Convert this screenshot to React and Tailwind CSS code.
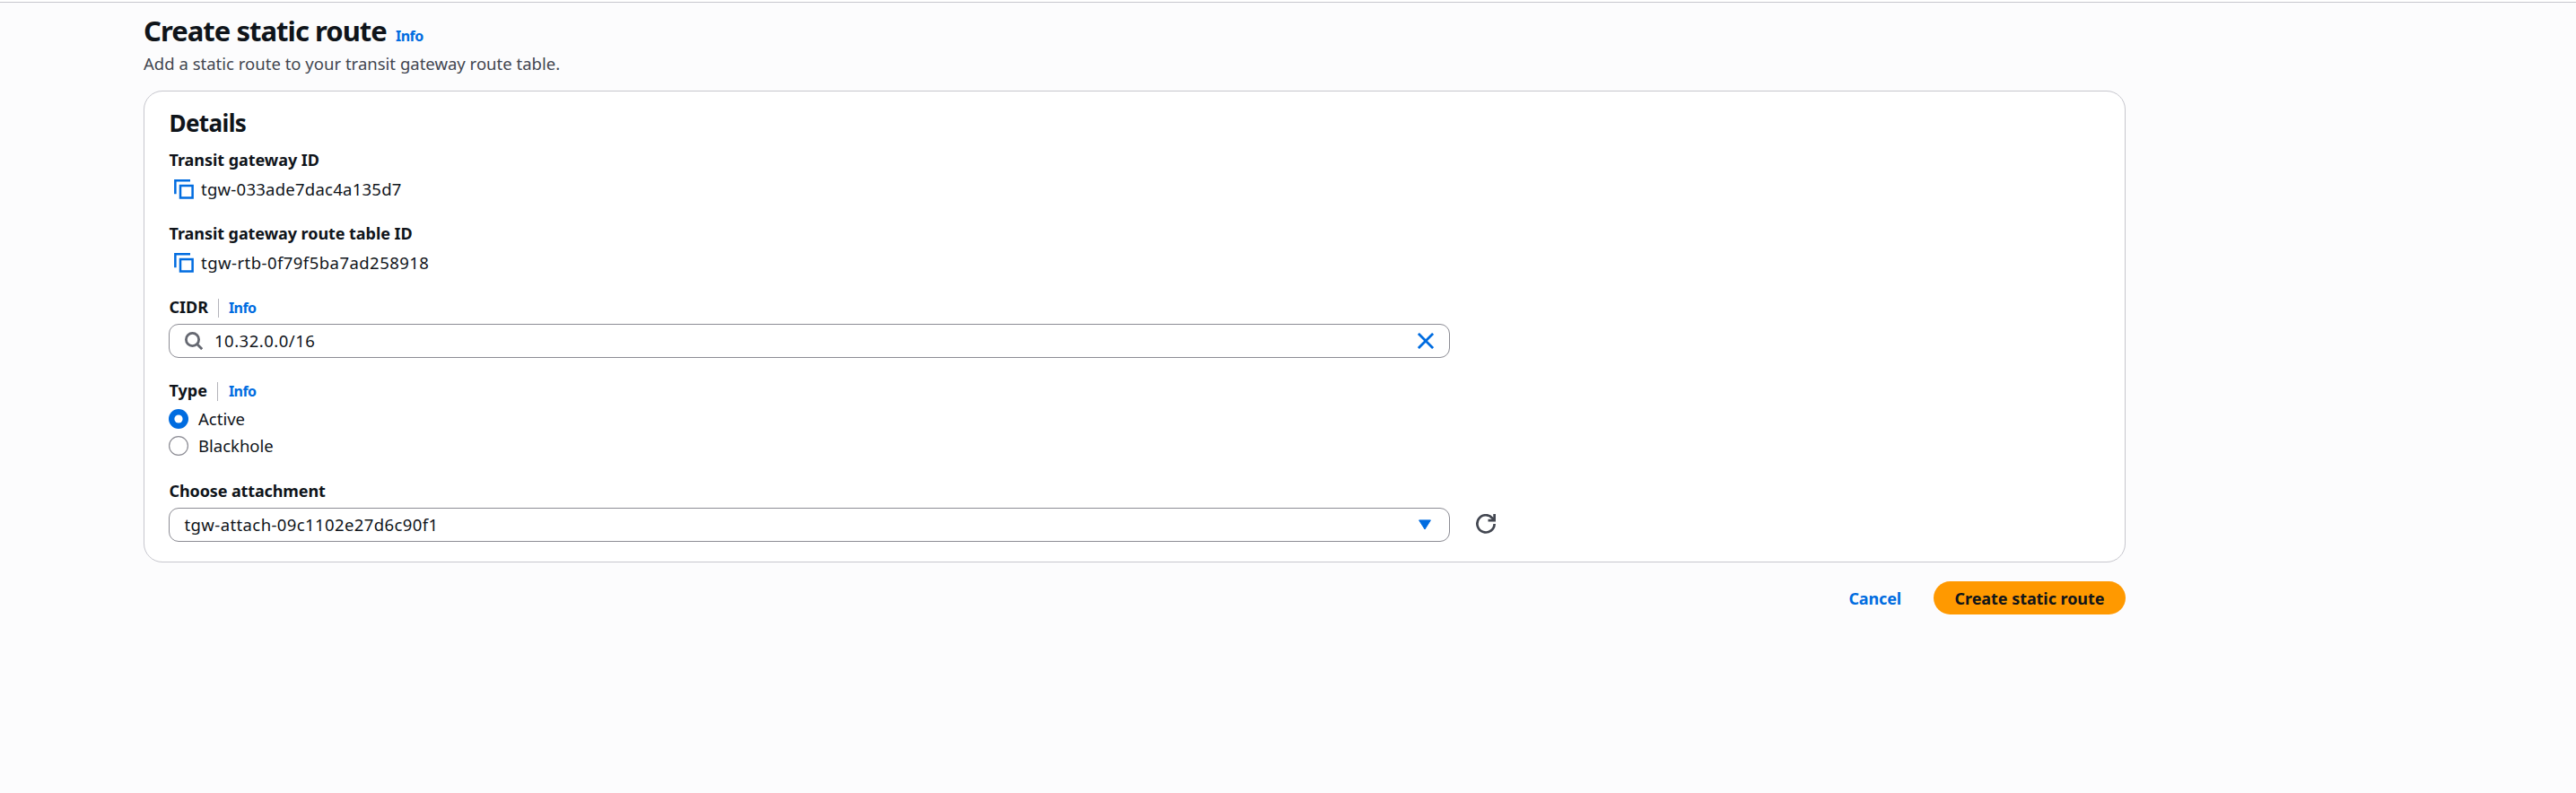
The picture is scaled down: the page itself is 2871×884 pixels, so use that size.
import React from "react";

function CopyIcon() {
  return (
    <svg className="ml-[6px] mr-[8px] h-[22px] w-[22px] shrink-0" viewBox="0 0 22 22" fill="none" stroke="#006ce0" strokeWidth="2.5">
      <path d="M1.35 16.2V1.35H18" />
      <path d="M7 7H20.6V20.6H7Z" />
    </svg>
  );
}

function Info({ className = "" }) {
  return (
    <a className={"text-[16px] font-bold text-[#006ce0] " + className}>Info</a>
  );
}

function CopyField({ label, labelClass, value, valueClass }) {
  return (
    <div className="flex flex-col gap-[7px]">
      <div className={"h-[26px] pl-[0.5px] font-bold " + labelClass}>{label}</div>
      <div className="flex h-[26px] items-center">
        <CopyIcon />
        <span className={"text-[18.5px] " + valueClass}>{value}</span>
      </div>
    </div>
  );
}

function LabelWithInfo({ label, className, dividerClass }) {
  return (
    <div className="flex h-[26px] items-center">
      <span className={"pl-[0.5px] font-bold " + className}>{label}</span>
      <span className={"mt-[2px] h-[21px] w-px bg-[#b4b4bb] " + dividerClass} />
      <Info className="mt-px w-[32px] tracking-[-0.6px]" />
    </div>
  );
}

export default function App() {
  return (
    <div className="h-[884px] w-full overflow-hidden bg-[#fcfcfd] font-['Noto_Sans',sans-serif] text-[18px] leading-[26px] whitespace-nowrap text-[#0f141a]">
      <div className="h-[3px] border-b border-[#c6c6cd] bg-white" />
      <main className="ml-[160px] w-[2209px] pt-[10px]">
        <header>
          <div className="flex items-baseline">
            <h1 className="w-[281px] text-[31px] leading-[42px] font-bold tracking-[-0.97px]">Create static route</h1>
            <Info className="leading-[26px] tracking-[-0.5px]" />
          </div>
          <p className="mt-[3px] text-[18.5px] tracking-[0.01px] text-[#424650]">Add a static route to your transit gateway route table.</p>
        </header>

        <section className="mt-[17px] h-[526px] rounded-[21px] border border-[#c6c6cd] bg-white pt-[17px] pl-[27px]">
          <h2 className="pl-[0.5px] text-[26px] leading-[36px] font-bold tracking-[-0.6px]">Details</h2>
          <div className="mt-[10px] flex flex-col gap-[23px]">
            <CopyField label="Transit gateway ID" labelClass="tracking-[-0.05px]" value="tgw-033ade7dac4a135d7" valueClass="tracking-[0.25px]" />
            <CopyField label="Transit gateway route table ID" labelClass="tracking-[-0.06px]" value="tgw-rtb-0f79f5ba7ad258918" valueClass="tracking-[0.46px]" />

            <div className="flex flex-col gap-[6px]">
              <LabelWithInfo label="CIDR" className="w-[55px]" dividerClass="mr-[11px]" />
              <div className="flex h-[38px] w-[1428px] items-center rounded-[11px] border border-[#8c8c94] bg-white pr-[17px] pl-[17px]">
                <svg className="mr-[13px] h-[20px] w-[20px]" viewBox="0 0 20 20" fill="none" stroke="#656871" strokeWidth="2.8">
                  <circle cx="8.5" cy="8.5" r="7.1" />
                  <path d="M13.5 13.5L19.2 19.2" />
                </svg>
                <span className="flex-1 text-[18.5px] tracking-[0.5px]">10.32.0.0/16</span>
                <svg className="h-[18px] w-[18px]" viewBox="0 0 18 18" fill="none" stroke="#006ce0" strokeWidth="2.8">
                  <path d="M0.9 0.9L17.1 17.1M17.1 0.9L0.9 17.1" />
                </svg>
              </div>
            </div>

            <div>
              <LabelWithInfo label="Type" className="w-[54px]" dividerClass="mr-[12px]" />
              <div className="mt-[6px] flex flex-col gap-[4px]">
                <label className="flex h-[26px] items-center gap-[11px]">
                  <svg className="h-[22px] w-[22px]" viewBox="0 0 22 22">
                    <circle cx="11" cy="11" r="11" fill="#006ce0" />
                    <circle cx="11" cy="11" r="4.6" fill="#fff" />
                  </svg>
                  <span className="text-[18.5px]">Active</span>
                </label>
                <label className="flex h-[26px] items-center gap-[11px]">
                  <svg className="h-[22px] w-[22px]" viewBox="0 0 22 22">
                    <circle cx="11" cy="11" r="10.4" fill="#fff" stroke="#8c8c94" strokeWidth="1.2" />
                  </svg>
                  <span className="text-[18.5px]">Blackhole</span>
                </label>
              </div>
            </div>

            <div className="mt-px flex flex-col gap-[6px]">
              <div className="h-[26px] pl-[0.5px] font-bold tracking-[-0.12px]">Choose attachment</div>
              <div className="flex items-center">
                <div className="flex h-[38px] w-[1428px] items-center justify-between rounded-[11px] border border-[#8c8c94] bg-white pr-[20px] pl-[16.5px]">
                  <span className="text-[18.5px] tracking-[0.4px]">tgw-attach-09c1102e27d6c90f1</span>
                  <svg className="h-[12px] w-[14px]" viewBox="0 0 14 12" fill="#006ce0" stroke="#006ce0" strokeLinejoin="round">
                    <path d="M0.6 0.9H13.4L7 11Z" />
                  </svg>
                </div>
                <svg className="mb-[2px] ml-[29px] h-[22px] w-[22px]" viewBox="0 0 22 22" fill="none" stroke="#424650" strokeWidth="2.7">
                  <path d="M20.6 11A9.6 9.6 0 1 1 18.3 4.6L20.4 7.3" />
                  <path d="M20.6 0V7.2H13.5" />
                </svg>
              </div>
            </div>
          </div>
        </section>

        <footer className="mt-[21px] flex items-center justify-end font-bold">
          <button className="mr-[36px] font-bold tracking-[-0.15px] text-[#006ce0]">Cancel</button>
          <button className="h-[37px] w-[214px] rounded-full bg-[#ff9900] font-bold tracking-[-0.06px]">Create static route</button>
        </footer>
      </main>
    </div>
  );
}
